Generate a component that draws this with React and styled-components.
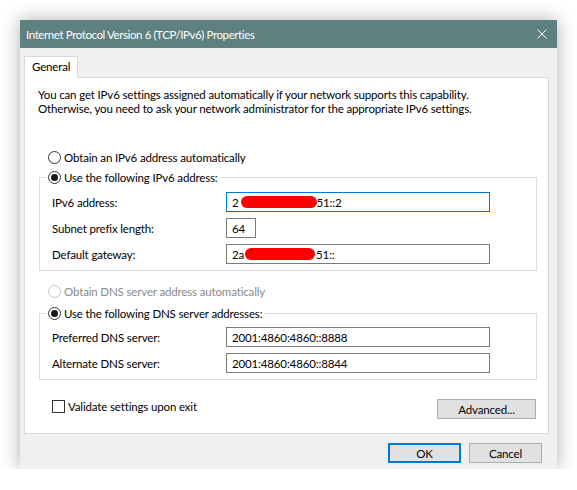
import styled, { createGlobalStyle } from "styled-components";

const GlobalStyle = createGlobalStyle`
  html, body {
    margin: 0;
    padding: 0;
    background: #ffffff;
  }
  body {
    font-family: Lato, "Noto Sans", sans-serif;
    font-size: 11.5px;
    letter-spacing: -0.15px;
    color: #000000;
  }
`;

const Page = styled.div`
  padding: 20px 0 0 20px;
`;

const Window = styled.div`
  width: 537px;
  background: #f0f0f0;
  box-shadow: 0 0 18px rgba(0, 0, 0, 0.32);
`;

const TitleBar = styled.div`
  height: 28px;
  background: #5e807e;
  color: #ffffff;
  display: flex;
  align-items: center;
  justify-content: space-between;
  padding: 0 10px 0 6px;
`;

const Title = styled.span`
  font-size: 11.5px;
  letter-spacing: -0.4px;
`;

const Body = styled.div`
  padding: 8px 8px 0 4px;
`;

const TabStrip = styled.div`
  display: flex;
`;

const Tab = styled.div`
  height: 21px;
  padding: 0 7px;
  line-height: 20px;
  background: #ffffff;
  border: 1px solid #d9d9d9;
  border-bottom: none;
  margin-bottom: -1px;
  position: relative;
  z-index: 1;
`;

const Panel = styled.div`
  background: #ffffff;
  border: 1px solid #d9d9d9;
  padding: 10px 0 14px 0;
`;

const Intro = styled.p`
  margin: 0 0 0 13px;
  line-height: 14px;
`;

const RadioRow = styled.div`
  display: flex;
  align-items: center;
  height: 16px;
  margin: ${({ $top }) => $top}px 0 0 23px;
  color: ${({ $disabled }) => ($disabled ? "#8a8a8a" : "#000000")};
`;

const Radio = styled.span`
  width: 11px;
  height: 11px;
  border: 1px solid ${({ $disabled }) => ($disabled ? "#c4c4c4" : "#333333")};
  border-radius: 50%;
  background: #ffffff;
  margin-right: 3px;
  display: flex;
  align-items: center;
  justify-content: center;
  &::after {
    content: "";
    display: ${({ $checked }) => ($checked ? "block" : "none")};
    width: 7px;
    height: 7px;
    border-radius: 50%;
    background: #1a1a1a;
  }
`;

const Group = styled.fieldset`
  margin: ${({ $top }) => $top}px 11px 0 14px;
  padding: 0 0 0 6px;
  border: 1px solid #dcdcdc;
  min-width: 0;
`;

const Legend = styled.legend`
  padding: 0 2px;
  display: flex;
  align-items: center;
  height: 16px;
`;

const GroupBody = styled.div`
  padding: ${({ $top }) => $top}px 0 6px 6px;
  display: flex;
  flex-direction: column;
  gap: 6px;
`;

const FieldRow = styled.div`
  display: flex;
  align-items: center;
  height: 20px;
`;

const FieldLabel = styled.span`
  width: 174px;
`;

const TextBox = styled.div`
  box-sizing: border-box;
  width: ${({ $w }) => $w}px;
  height: 20px;
  border: 1px solid ${({ $focused }) => ($focused ? "#0078d7" : "#7a7a7a")};
  background: #ffffff;
  padding-left: 5px;
  display: flex;
  align-items: center;
  white-space: nowrap;
`;

const Redacted = styled.span`
  display: inline-block;
  width: ${({ $w }) => $w}px;
  height: 12px;
  border-radius: 6px;
  background: #ff0000;
  margin: 0 ${({ $r }) => $r || 0}px 0 ${({ $l }) => $l || 0}px;
`;

const BottomRow = styled.div`
  display: flex;
  justify-content: space-between;
  align-items: flex-start;
  margin: 19px 12px 0 27px;
`;

const CheckLabel = styled.div`
  display: flex;
  align-items: center;
  height: 14px;
`;

const CheckBox = styled.span`
  width: 11px;
  height: 11px;
  border: 1px solid #333333;
  background: #ffffff;
  margin-right: 3px;
`;

const Button = styled.div`
  box-sizing: border-box;
  width: ${({ $w }) => $w}px;
  height: 20px;
  background: #e1e1e1;
  border: ${({ $default }) =>
    $default ? "2px solid #0078d7" : "1px solid #adadad"};
  display: flex;
  align-items: center;
  justify-content: center;
`;

const Footer = styled.div`
  display: flex;
  justify-content: flex-end;
  gap: 8px;
  padding: 9px 7px 6px 0;
`;

const CloseIcon = () => (
  <svg width="10" height="10" viewBox="0 0 10 10">
    <path d="M0.5 0.5 L9.5 9.5 M9.5 0.5 L0.5 9.5" stroke="#ffffff" strokeWidth="1" />
  </svg>
);

const App = () => {
  return (
    <Page>
      <GlobalStyle />
      <Window>
        <TitleBar>
          <Title>Internet Protocol Version 6 (TCP/IPv6) Properties</Title>
          <CloseIcon />
        </TitleBar>
        <Body>
          <TabStrip>
            <Tab>General</Tab>
          </TabStrip>
          <Panel>
            <Intro>
              You can get IPv6 settings assigned automatically if your network supports this capability.
              <br />
              Otherwise, you need to ask your network administrator for the appropriate IPv6 settings.
            </Intro>

            <RadioRow $top={33}>
              <Radio />
              Obtain an IPv6 address automatically
            </RadioRow>

            <Group $top={4}>
              <Legend>
                <Radio $checked />
                Use the following IPv6 address:
              </Legend>
              <GroupBody $top={7}>
                <FieldRow>
                  <FieldLabel>IPv6 address:</FieldLabel>
                  <TextBox $w={264} $focused>
                    2<Redacted $w={76} $l={2} $r={0} />51::2
                  </TextBox>
                </FieldRow>
                <FieldRow>
                  <FieldLabel>Subnet prefix length:</FieldLabel>
                  <TextBox $w={30}>64</TextBox>
                </FieldRow>
                <FieldRow>
                  <FieldLabel>Default gateway:</FieldLabel>
                  <TextBox $w={264}>
                    2a<Redacted $w={70} $l={1} $r={1} />51::
                  </TextBox>
                </FieldRow>
              </GroupBody>
            </Group>

            <RadioRow $top={12} $disabled>
              <Radio $disabled />
              Obtain DNS server address automatically
            </RadioRow>

            <Group $top={6}>
              <Legend>
                <Radio $checked />
                Use the following DNS server addresses:
              </Legend>
              <GroupBody $top={6}>
                <FieldRow>
                  <FieldLabel>Preferred DNS server:</FieldLabel>
                  <TextBox $w={264}>2001:4860:4860::8888</TextBox>
                </FieldRow>
                <FieldRow>
                  <FieldLabel>Alternate DNS server:</FieldLabel>
                  <TextBox $w={264}>2001:4860:4860::8844</TextBox>
                </FieldRow>
              </GroupBody>
            </Group>

            <BottomRow>
              <CheckLabel>
                <CheckBox />
                Validate settings upon exit
              </CheckLabel>
              <Button $w={99}>Advanced...</Button>
            </BottomRow>
          </Panel>
          <Footer>
            <Button $w={73} $default>OK</Button>
            <Button $w={73}>Cancel</Button>
          </Footer>
        </Body>
      </Window>
    </Page>
  );
};

export default App;
